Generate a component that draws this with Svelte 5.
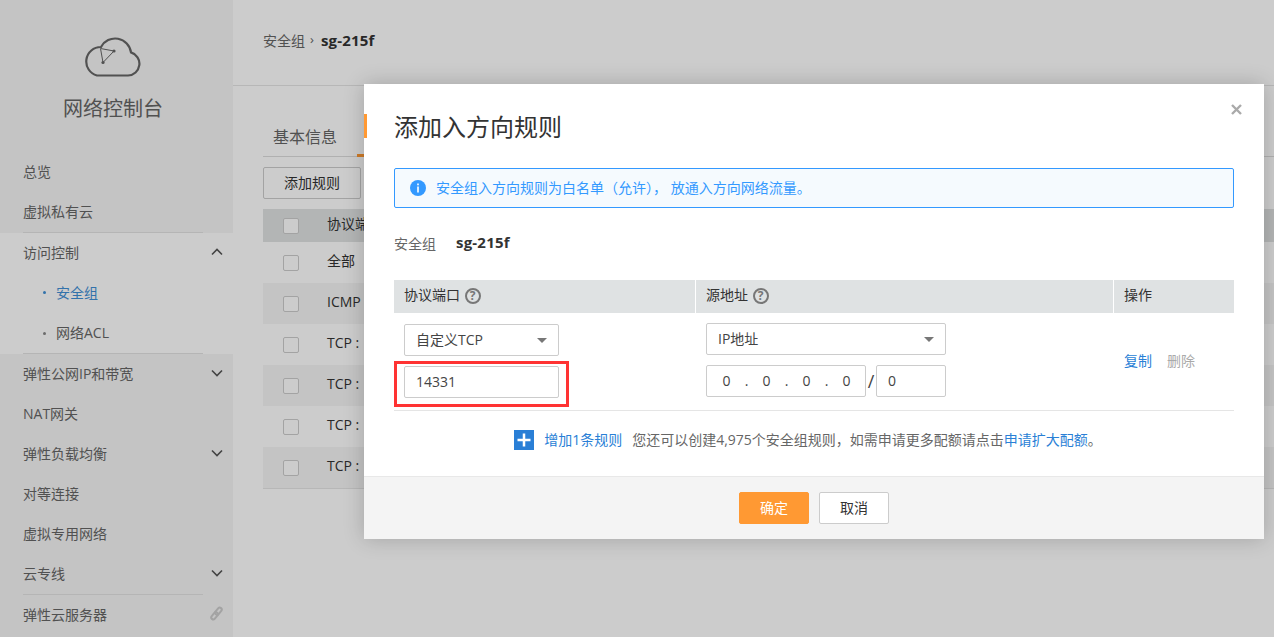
<script lang="ts">
	const navItems = [
		{ label: '总览', h: 40 },
		{ label: '虚拟私有云', h: 41, line: true },
		{ label: '访问控制', h: 40, arrow: 'up', open: true },
		{ label: '安全组', h: 40, sub: true, active: true, open: true },
		{ label: '网络ACL', h: 41, sub: true, line: true, open: true },
		{ label: '弹性公网IP和带宽', h: 40, arrow: 'down' },
		{ label: 'NAT网关', h: 40 },
		{ label: '弹性负载均衡', h: 40, arrow: 'down' },
		{ label: '对等连接', h: 40 },
		{ label: '虚拟专用网络', h: 40 },
		{ label: '云专线', h: 41, arrow: 'down', line: true },
		{ label: '弹性云服务器', h: 41, link: true, line: false }
	];
	const rows = ['全部', 'ICMP', 'TCP :', 'TCP :', 'TCP :', 'TCP :'];
	const octets = ['0', '0', '0', '0'];
</script>

<div class="page">
	<aside class="sidebar">
		<div class="logo">
			<svg width="56" height="41" viewBox="85 36 56 41" fill="none" stroke="#666" stroke-width="1.8">
				<path stroke-width="2.2" d="M97 75.5H128A11.8 11.8 0 0 0 131 52.4A16 16 0 0 0 101 47A14.5 14.5 0 0 0 97 75.5Z" />
				<path stroke-width="1" d="M100.5 48.500L114 51L103 62.500Z" />
				<circle cx="114" cy="51" r="1.600" fill="#666" stroke="none" />
				<circle cx="103" cy="62.500" r="1.600" fill="#666" stroke="none" />
			</svg>
			<div class="logo-title">网络控制台</div>
		</div>
		<nav>
			{#each navItems as item}
				<div class="nav-item" class:open={item.open} class:sub={item.sub} class:active={item.active} class:line={item.line} class:tall={item.link} style="height: {item.h}px">
					<span>{item.label}</span>
					{#if item.arrow}
						<svg class="chev" width="12" height="8" viewBox="0 0 12 8" fill="none" stroke="#555" stroke-width="1.600">
							{#if item.arrow === 'up'}
								<path d="M1 6.500L6 1.500L11 6.500" />
							{:else}
								<path d="M1 1.500L6 6.500L11 1.500" />
							{/if}
						</svg>
					{/if}
					{#if item.link}
						<svg class="chev" width="13" height="15" viewBox="0 0 13 15" fill="none" stroke="#ccc" stroke-width="2">
							<g transform="rotate(40 6.500 7.500)">
								<rect x="4.500" y="0.500" width="4" height="8" rx="2" />
								<rect x="4.500" y="6.500" width="4" height="8" rx="2" />
							</g>
						</svg>
					{/if}
				</div>
			{/each}
		</nav>
	</aside>

	<main class="main">
		<header class="crumbs">
			<span class="crumb">安全组</span>
			<span class="crumb-sep">›</span>
			<b>sg-215f</b>
		</header>
		<div class="content">
			<div class="tabs">
				<span class="tab">基本信息</span>
				<span class="tab-active"></span>
			</div>
			<button class="add-btn">添加规则</button>
			<div class="rules">
				<div class="rule head"><i class="check"></i><span>协议端口</span></div>
				{#each rows as r, i}
					<div class="rule" class:alt={i % 2 === 1}><i class="check"></i><span>{r}</span></div>
				{/each}
			</div>
		</div>
	</main>

	<div class="mask"></div>

	<div class="modal">
		<div class="modal-body">
			<span class="mark"></span>
			<svg class="close" width="11" height="11" viewBox="0 0 11 11" stroke="#aaa" stroke-width="2.400">
				<path d="M1 1L10 10M10 1L1 10" />
			</svg>
			<h2>添加入方向规则</h2>
			<div class="info">
				<svg width="16" height="16" viewBox="0 0 16 16">
					<circle cx="8" cy="8" r="8" fill="#3399ff" />
					<rect x="7.200" y="3.500" width="1.600" height="1.800" fill="#fff" />
					<rect x="7.200" y="6.500" width="1.600" height="6" fill="#fff" />
				</svg>
				<span>安全组入方向规则为白名单（允许）， 放通入方向网络流量。</span>
			</div>
			<div class="sg-line">
				<span class="sg-label">安全组</span>
				<b>sg-215f</b>
			</div>

			<div class="grid-head">
				<div>协议端口 <i class="help">?</i></div>
				<div>源地址 <i class="help">?</i></div>
				<div>操作</div>
			</div>
			<div class="grid-row">
				<div class="cell first">
					<div class="select port">自定义TCP<i class="caret"></i></div>
					<div class="field port">
						14331
						<span class="redbox"></span>
					</div>
				</div>
				<div class="cell">
					<div class="select source">IP地址<i class="caret"></i></div>
					<div class="ip-line">
						<div class="field ip">
							{#each octets as o, i}
								<span class="octet">{o}</span>
								{#if i < 3}<span class="dot">.</span>{/if}
							{/each}
						</div>
						<span class="slash">/</span>
						<div class="field mask-len">0</div>
					</div>
				</div>
				<div class="ops">
					<span class="link">复制</span>
					<span class="muted">删除</span>
				</div>
			</div>

			<div class="add-line">
				<svg width="20" height="20" viewBox="0 0 20 20">
					<rect width="20" height="20" fill="#2a7fd6" />
					<path d="M10 3.500V16.500M3.500 10H16.500" stroke="#fff" stroke-width="2.500" />
				</svg>
				<span class="link add-link">增加1条规则</span>
				<span class="quota">您还可以创建4,975个安全组规则，如需申请更多配额请点击<span class="link">申请扩大配额</span>。</span>
			</div>
		</div>
		<footer class="modal-foot">
			<button class="ok">确定</button>
			<button class="cancel">取消</button>
		</footer>
	</div>
</div>

<style>
	:global(body) {
		margin: 0;
	}
	.page {
		position: relative;
		display: flex;
		width: 1274px;
		height: 637px;
		overflow: hidden;
		background: #fff;
		color: #333;
		font-family: 'Open Sans', 'Noto Sans CJK SC', sans-serif;
		font-size: 14px;
	}
	button {
		font: inherit;
	}

	.sidebar {
		flex: none;
		width: 233px;
		background: #f5f5f5;
		color: #666;
	}
	.logo {
		display: flex;
		flex-direction: column;
		align-items: center;
		height: 152px;
		padding: 36px 7px 0 0;
		box-sizing: border-box;
	}
	.logo-title {
		margin-top: 18px;
		font-size: 20px;
		line-height: 28px;
		color: #666;
	}
	.nav-item {
		position: relative;
		display: flex;
		align-items: center;
		justify-content: space-between;
		padding: 0 10px 2px 23px;
		box-sizing: border-box;
	}
	.nav-item.line,
	.nav-item.tall {
		padding-bottom: 4px;
	}
	.nav-item.open {
		background: #fff;
	}
	.nav-item.sub {
		padding-left: 56px;
	}
	.nav-item.sub::before {
		content: '';
		position: absolute;
		left: 43px;
		top: 50%;
		width: 3px;
		height: 3px;
		margin-top: -2px;
		border-radius: 50%;
		background: #888;
	}
	.nav-item.active {
		color: #3f8fd6;
	}
	.nav-item.active::before {
		background: #3f8fd6;
	}
	.nav-item.line::after {
		content: '';
		position: absolute;
		left: 23px;
		right: 30px;
		bottom: 0;
		height: 1px;
		background: #e3e3e3;
	}

	.main {
		flex: 1;
		min-width: 0;
	}
	.crumbs {
		display: flex;
		align-items: center;
		gap: 5px;
		height: 86px;
		box-sizing: border-box;
		padding: 0 30px 5px;
		background: #fff;
		border-bottom: 1px solid #e5e5e5;
		color: #666;
		font-size: 14px;
	}
	.crumbs b {
		margin-left: 2px;
		color: #333;
		font-size: 15px;
		letter-spacing: 0.2px;
	}
	.crumb-sep {
		margin-top: -3px;
		font-size: 13px;
	}
	.content {
		padding: 0 0 0 30px;
	}
	.tabs {
		display: flex;
		align-items: flex-end;
		height: 70px;
		border-bottom: 1px solid #ddd;
	}
	.tab {
		width: 94px;
		padding-left: 10px;
		box-sizing: border-box;
		height: 32px;
		font-size: 16px;
		color: #666;
	}
	.tab-active {
		width: 200px;
		height: 3px;
		margin-bottom: -1px;
		background: #ff9933;
	}
	.add-btn {
		display: block;
		width: 98px;
		height: 32px;
		margin-top: 10px;
		padding: 0 0 3px;
		background: #fff;
		border: 1px solid #ccc;
		border-radius: 2px;
		color: #333;
	}
	.rules {
		margin-top: 10px;
		border-bottom: 1px solid #e5e5e5;
	}
	.rule {
		display: flex;
		align-items: center;
		height: 41px;
		padding-left: 20px;
		color: #333;
	}
	.rule span {
		margin-top: -5px;
	}
	.rule.head span {
		margin-top: -6px;
	}
	.rule.head {
		height: 33px;
		background: #e0e3e3;
	}
	.rule.alt {
		background: #f5f5f5;
	}
	.check {
		flex: none;
		width: 14px;
		height: 14px;
		margin-right: 28px;
		background: #fff;
		border: 1px solid #ccc;
		border-radius: 2px;
	}

	.mask {
		position: absolute;
		inset: 0;
		background: rgba(0, 0, 0, 0.2);
	}

	.modal {
		position: absolute;
		left: 364px;
		top: 84px;
		width: 900px;
		height: 455px;
		display: flex;
		flex-direction: column;
		background: #fff;
		box-shadow: 0 0 20px rgba(0, 0, 0, 0.2);
	}
	.modal-body {
		position: relative;
		flex: 1;
		padding: 0 30px;
	}
	.mark {
		position: absolute;
		left: 0;
		top: 30px;
		width: 3px;
		height: 24px;
		background: #ff9933;
	}
	.close {
		position: absolute;
		right: 22px;
		top: 20px;
	}
	h2 {
		margin: 0;
		padding-top: 26px;
		height: 84px;
		box-sizing: border-box;
		font-size: 24px;
		font-weight: 400;
		line-height: 34px;
		color: #333;
	}
	.info {
		display: flex;
		align-items: center;
		gap: 10px;
		height: 40px;
		padding-left: 15px;
		box-sizing: border-box;
		background: #f5fafe;
		border: 1px solid #3399ff;
		border-radius: 2px;
		color: #3399ff;
	}
	.info span {
		margin-top: -2px;
	}
	.sg-line {
		display: flex;
		height: 72px;
		align-items: center;
		gap: 20px;
		padding-bottom: 2px;
		box-sizing: border-box;
	}
	.sg-label {
		color: #666;
	}
	.sg-line b {
		margin-top: -2px;
		color: #333;
		font-size: 15px;
		letter-spacing: 0.2px;
	}
	.grid-head,
	.grid-row {
		display: grid;
		grid-template-columns: 301px 418px 121px;
	}
	.grid-head {
		height: 33px;
		background: #dfe2e3;
		line-height: 29px;
		color: #333;
	}
	.grid-head > div {
		padding-left: 10px;
	}
	.grid-head > div + div {
		border-left: 1px solid #fff;
	}
	.help {
		display: inline-block;
		box-sizing: border-box;
		width: 16px;
		height: 16px;
		margin-left: 1px;
		border: 2px solid #777;
		border-radius: 50%;
		color: #777;
		font-size: 12px;
		font-style: normal;
		font-weight: 700;
		line-height: 12px;
		text-align: center;
		vertical-align: 0;
	}
	.grid-row {
		height: 98px;
		border-bottom: 1px solid #e5e5e5;
		box-sizing: border-box;
	}
	.cell {
		display: flex;
		flex-direction: column;
		gap: 10px;
		padding: 10px 0 0 10px;
	}
	.cell.first {
		padding-top: 11px;
	}
	.cell + .cell {
		padding-left: 11px;
	}
	.select,
	.field {
		position: relative;
		display: flex;
		align-items: center;
		height: 32px;
		box-sizing: border-box;
		padding: 0 0 2px 11px;
		background: #fff;
		border: 1px solid #ccc;
		border-radius: 2px;
		color: #444;
	}
	.port {
		width: 155px;
	}
	.source {
		width: 240px;
	}
	.caret {
		position: absolute;
		right: 11px;
		top: 13px;
		border-style: solid;
		border-width: 5px 5px 0;
		border-color: #777 transparent transparent;
	}
	.redbox {
		position: absolute;
		left: -11px;
		top: -6px;
		width: 175px;
		height: 46px;
		box-sizing: border-box;
		border: 3px solid #f33;
	}
	.ip-line {
		display: flex;
		align-items: center;
	}
	.field.ip {
		width: 160px;
		padding-left: 15px;
	}
	.octet {
		width: 9px;
		text-align: center;
	}
	.dot {
		width: 31px;
		text-align: center;
	}
	.slash {
		width: 10px;
		text-align: center;
		font-size: 18px;
		color: #444;
	}
	.mask-len {
		width: 70px;
	}
	.ops {
		display: flex;
		align-items: center;
		gap: 15px;
		padding: 0 0 3px 11px;
	}
	.link {
		color: #2a7fd6;
	}
	.muted {
		color: #aaa;
	}
	.add-line {
		display: flex;
		align-items: center;
		justify-content: center;
		height: 58px;
		padding-right: 12px;
	}
	.add-line > span {
		margin-top: -2px;
	}
	.add-link {
		margin: 0 10px;
	}
	.quota {
		color: #666;
	}
	.modal-foot {
		display: flex;
		justify-content: center;
		gap: 10px;
		height: 63px;
		padding-top: 15px;
		box-sizing: border-box;
		background: #f4f4f4;
		border-top: 1px solid #e8e8e8;
	}
	.modal-foot button {
		width: 70px;
		height: 32px;
		padding: 0 0 2px;
		border-radius: 2px;
	}
	.ok {
		background: #ff9933;
		border: 1px solid #ff9933;
		color: #fff;
	}
	.cancel {
		background: #fff;
		border: 1px solid #ccc;
		color: #333;
	}
</style>
